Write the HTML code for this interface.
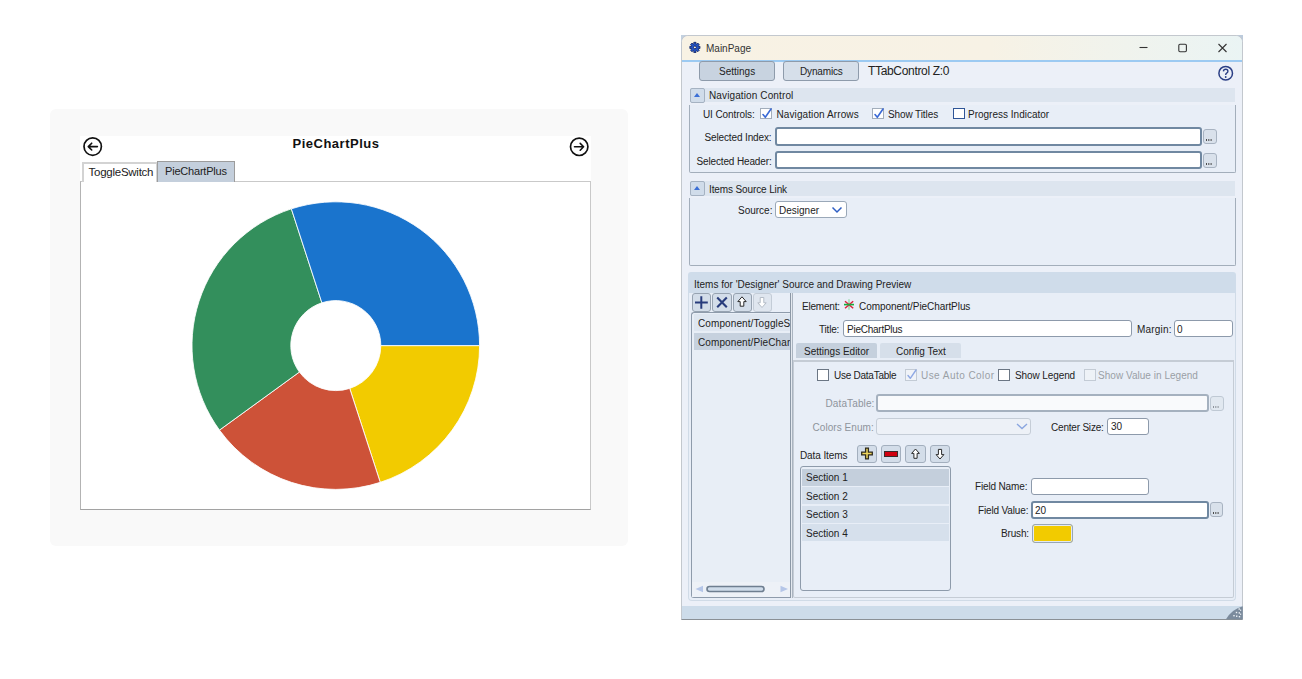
<!DOCTYPE html>
<html><head><meta charset="utf-8">
<style>
*{box-sizing:border-box;margin:0;padding:0}
html,body{width:1302px;height:679px;overflow:hidden;background:#fff;font-family:"Liberation Sans",sans-serif;color:#1a1a1a}
.a{position:absolute}
.t{position:absolute;white-space:pre;line-height:1}
/* left panel */
#lp{left:50px;top:109px;width:578px;height:437px;background:#f9f9f9;border-radius:6px}
#lw{left:80px;top:136px;width:511px;height:374px;background:#fff}
#cb{left:80px;top:181px;width:511px;height:329px;border:1px solid #c9c9c9;border-left-color:#b3b3b3;border-bottom-color:#a2a2a2;background:#fff}
/* window */
#win{left:681px;top:35px;width:562px;height:585px;background:#ecf0f8;border:1px solid #c3c8ce;border-bottom-color:#8a9096;border-radius:7px 7px 0 0;overflow:hidden}
#tb{left:0;top:0;width:562px;height:26px;background:linear-gradient(90deg,#f8f2e4 0%,#f7f2e5 55%,#eaf4f4 100%);border-bottom:2px solid #9ccaf2}
.w{font-size:10px;color:#222}
.btn{position:absolute;border:1px solid #9aa6b4;border-radius:3px;background:#d9e2ec}
.hdr{position:absolute;background:#dde5ef}
.cbtn{position:absolute;width:15px;height:15px;border:1px solid #a5b2c2;border-radius:2px;background:#d0dcea}
.cbtn:after{content:"";position:absolute;left:3px;top:4px;border-left:3.5px solid transparent;border-right:3.5px solid transparent;border-bottom:4px solid #3b6fd6}
.gb{position:absolute;border:1px solid #a3aebb;border-top:none;border-radius:0 0 2px 2px;background:#e8eef7}
.tx{position:absolute;background:#fff;border:2px solid #7088a1;border-radius:3px}
.tx2{position:absolute;background:#fff;border:1px solid #9aa8b8;border-radius:2px}
.dots{position:absolute;width:13.5px;height:15px;border:1.5px solid #a8b3c1;border-radius:3px;background:#d9e1eb}
.dots:after{content:"";position:absolute;left:2.2px;top:9.3px;width:1.3px;height:1.5px;background:#4a4a4a;box-shadow:2.3px 0 0 #4a4a4a,4.6px 0 0 #4a4a4a}
.dis:after{background:#8d939b;box-shadow:2.3px 0 0 #8d939b,4.6px 0 0 #8d939b}
.chk{position:absolute;width:12px;height:11px;border:1.3px solid #a2adbb;background:#fff}
</style></head><body>

<!-- LEFT PANEL -->
<div id="lp" class="a"></div>
<div id="lw" class="a"></div>
<div id="cb" class="a"></div>
<svg class="a" style="left:0;top:0" width="1302" height="679">
  <circle cx="92.7" cy="146.6" r="8.7" fill="none" stroke="#111" stroke-width="1.7"/>
  <path d="M88.3 146.6 H97.4 M91.7 143.2 L88.3 146.6 L91.7 150" fill="none" stroke="#111" stroke-width="1.6" stroke-linecap="round" stroke-linejoin="round"/>
  <circle cx="579.2" cy="146.8" r="8.7" fill="none" stroke="#111" stroke-width="1.7"/>
  <path d="M574.5 146.8 H583.6 M580.2 143.4 L583.6 146.8 L580.2 150.2" fill="none" stroke="#111" stroke-width="1.6" stroke-linecap="round" stroke-linejoin="round"/>
</svg>
<div class="t" style="left:292.5px;top:137px;font-size:13px;letter-spacing:0.5px;font-weight:bold;color:#111">PieChartPlus</div>
<!-- tabs -->
<div class="a" style="left:82px;top:162px;width:76px;height:20px;border:2px solid #d3d3d3;border-bottom:none;background:#fff"></div>
<div class="t" style="left:88.5px;top:167px;font-size:11.5px;letter-spacing:-0.25px;color:#222">ToggleSwitch</div>
<div class="a" style="left:157px;top:161px;width:78px;height:21px;border:1px solid #9c9c9c;border-bottom:none;background:#c4cfdc"></div>
<div class="t" style="left:165px;top:166px;font-size:11px;letter-spacing:-0.2px;color:#222">PieChartPlus</div>
<!-- pie -->
<svg class="a" style="left:0;top:0" width="1302" height="679" id="pie">
<path d="M479.60 345.60 A143.8 143.8 0 0 1 380.24 482.36 L349.71 388.40 A45.0 45.0 0 0 0 380.80 345.60Z" fill="#f2cb00" stroke="#fff" stroke-width="0.85"/>
<path d="M380.24 482.36 A143.8 143.8 0 0 1 219.46 430.12 L299.39 372.05 A45.0 45.0 0 0 0 349.71 388.40Z" fill="#cd5238" stroke="#fff" stroke-width="0.85"/>
<path d="M219.46 430.12 A143.8 143.8 0 0 1 291.36 208.84 L321.89 302.80 A45.0 45.0 0 0 0 299.39 372.05Z" fill="#338f5c" stroke="#fff" stroke-width="0.85"/>
<path d="M291.36 208.84 A143.8 143.8 0 0 1 479.60 345.60 L380.80 345.60 A45.0 45.0 0 0 0 321.89 302.80Z" fill="#1a74cd" stroke="#fff" stroke-width="0.85"/>
</svg>

<!-- WINDOW -->
<div class="a" style="left:681px;top:35px;width:6px;height:6px;background:#c3d1e0"></div>
<div class="a" style="left:1237px;top:35px;width:6px;height:6px;background:#bccbdc"></div>
<div id="win" class="a">
  <div id="tb" class="a"></div>
</div>

<!-- title bar -->
<svg class="a" style="left:688px;top:41px" width="14" height="14" viewBox="0 0 14 14">
  <path d="M5.87 3.06 L5.77 1.33 L8.03 1.33 L7.93 3.06 L8.53 3.30 L9.69 2.01 L11.29 3.61 L10.00 4.77 L10.24 5.37 L11.97 5.27 L11.97 7.53 L10.24 7.43 L10.00 8.03 L11.29 9.19 L9.69 10.79 L8.53 9.50 L7.93 9.74 L8.03 11.47 L5.77 11.47 L5.87 9.74 L5.27 9.50 L4.11 10.79 L2.51 9.19 L3.80 8.03 L3.56 7.43 L1.83 7.53 L1.83 5.27 L3.56 5.37 L3.80 4.77 L2.51 3.61 L4.11 2.01 L5.27 3.30Z" fill="#2353c6" stroke="#0e2160" stroke-width="0.8" stroke-linejoin="miter"/>
  <circle cx="6.9" cy="6.4" r="1.4" fill="#f7f1e3" stroke="#0e2160" stroke-width="0.9"/>
</svg>
<div class="t w" style="left:706px;top:44px;font-size:10px;color:#333">MainPage</div>
<svg class="a" style="left:1130px;top:38px" width="110" height="20">
  <path d="M9.5 9.5 H17.5" stroke="#333" stroke-width="1.1"/>
  <rect x="48.8" y="6.2" width="7.6" height="7.6" rx="1.2" fill="none" stroke="#333" stroke-width="1.1"/>
  <path d="M88.5 6 L96.5 14 M96.5 6 L88.5 14" stroke="#333" stroke-width="1.1"/>
</svg>
<!-- top buttons -->
<div class="btn" style="left:699px;top:61px;width:76px;height:20px;background:#c8d3e0;border-color:#8e9bab"></div>
<div class="t w" style="left:719px;top:67px">Settings</div>
<div class="btn" style="left:783px;top:61px;width:76px;height:20px;background:#d6dfea;border-color:#8e9bab"></div>
<div class="t w" style="left:800px;top:67px;letter-spacing:-0.15px">Dynamics</div>
<div class="t" style="left:868px;top:65px;font-size:12px;letter-spacing:-0.33px;color:#222">TTabControl Z:0</div>
<svg class="a" style="left:1217px;top:65px" width="18" height="18">
  <circle cx="8.7" cy="8.2" r="6.8" fill="none" stroke="#2b3f85" stroke-width="1.5"/>
  <path d="M6.4 6.4 Q6.6 4.3 8.7 4.3 Q10.9 4.3 10.9 6.3 Q10.9 7.6 9.6 8.2 Q8.7 8.7 8.7 9.9" fill="none" stroke="#2b3f85" stroke-width="1.4"/>
  <circle cx="8.7" cy="12" r="0.9" fill="#2b3f85"/>
</svg>

<!-- Navigation Control -->
<div class="hdr" style="left:690px;top:88px;width:545px;height:14px"></div>
<div class="cbtn" style="left:690px;top:88px"></div>
<div class="t w" style="left:709px;top:91px;letter-spacing:0.12px">Navigation Control</div>
<div class="gb" style="left:689px;top:105px;width:547px;height:68px"></div>
<div class="t w" style="left:703px;top:110px;letter-spacing:-0.1px">UI Controls:</div>
<div class="chk" style="left:760px;top:108px"></div><svg class="a" style="left:760px;top:107px" width="14" height="13"><path d="M3 7.5 L5.3 10.3 L11 2" fill="none" stroke="#3b6ad6" stroke-width="1.6" stroke-linecap="round" stroke-linejoin="round"/></svg>
<div class="t w" style="left:776.5px;top:110px;letter-spacing:0.1px">Navigation Arrows</div>
<div class="chk" style="left:872px;top:108px"></div><svg class="a" style="left:872px;top:107px" width="14" height="13"><path d="M3 7.5 L5.3 10.3 L11 2" fill="none" stroke="#3b6ad6" stroke-width="1.6" stroke-linecap="round" stroke-linejoin="round"/></svg>
<div class="t w" style="left:888px;top:110px;letter-spacing:-0.1px">Show Titles</div>
<div class="chk" style="left:953px;top:108px;border-color:#2f5597;border-width:1.5px"></div>
<div class="t w" style="left:968px;top:110px">Progress Indicator</div>
<div class="t w" style="left:704.5px;top:133px;letter-spacing:-0.13px">Selected Index:</div>
<div class="tx" style="left:775px;top:127px;width:427px;height:19px"></div>
<div class="dots" style="left:1203px;top:129px"></div>
<div class="t w" style="left:696.5px;top:157px;letter-spacing:-0.14px">Selected Header:</div>
<div class="tx" style="left:775px;top:151px;width:427px;height:18px"></div>
<div class="dots" style="left:1203px;top:153px"></div>

<!-- Items Source Link -->
<div class="hdr" style="left:690px;top:181px;width:545px;height:15px"></div>
<div class="cbtn" style="left:690px;top:181px"></div>
<div class="t w" style="left:709px;top:185px;letter-spacing:-0.12px">Items Source Link</div>
<div class="gb" style="left:689px;top:198px;width:547px;height:68px"></div>
<div class="t w" style="left:738px;top:206px">Source:</div>
<div class="tx2" style="left:775px;top:201px;width:72px;height:17px;border-radius:3px"></div>
<div class="t w" style="left:779px;top:206px">Designer</div>
<svg class="a" style="left:831px;top:206px" width="12" height="8"><path d="M1.5 1.5 L6 6 L10.5 1.5" fill="none" stroke="#2f5fc4" stroke-width="1.5"/></svg>

<!-- Items for Designer -->
<div class="a" style="left:688px;top:272px;width:548px;height:21px;background:#cfdcea;border-radius:3px 3px 0 0"></div>
<div class="t w" style="left:694px;top:280px">Items for 'Designer' Source and Drawing Preview</div>
<div class="a" style="left:688px;top:293px;width:548px;height:308px;border:1px solid #d0dbe7;border-top:none;border-radius:0 0 4px 4px;background:#e8eef7"></div>
<!-- toolbar -->
<div class="btn" style="left:691.5px;top:293px;width:19.5px;height:19px;background:#d3dde9;border:1.3px solid #97a3b1"></div>
<svg class="a" style="left:692px;top:293px" width="19" height="19"><path d="M9.3 3.2 V15.8 M3 9.5 H15.8" stroke="#283c7c" stroke-width="2"/></svg>
<div class="btn" style="left:712px;top:293px;width:20px;height:19px;background:#d3dde9;border:1.3px solid #97a3b1"></div>
<svg class="a" style="left:712px;top:293px" width="20" height="19"><path d="M5.2 4.5 L14.8 14.3 M14.8 4.5 L5.2 14.3" stroke="#283c7c" stroke-width="2.1"/></svg>
<div class="btn" style="left:732.5px;top:293px;width:19.5px;height:19px;background:#d3dde9;border:1.3px solid #97a3b1"></div>
<svg class="a" style="left:733px;top:293px" width="19" height="19"><path d="M9 3.8 L13.2 8.6 H10.8 V13.2 H7.2 V8.6 H4.8 Z" fill="#fff" stroke="#2a2a2a" stroke-width="1" stroke-linejoin="round"/></svg>
<div class="btn" style="left:752.5px;top:293px;width:19.5px;height:19px;background:#dfe6ef;border:1.3px solid #c3ccd7"></div>
<svg class="a" style="left:753px;top:293px" width="19" height="19"><path d="M9 14.5 L13.2 9.8 H10.8 V4.5 H7.2 V9.8 H4.8 Z" fill="#fff" stroke="#b4bcc6" stroke-width="1" stroke-linejoin="round"/></svg>
<!-- left list -->
<div class="a" style="left:691px;top:312px;width:101px;height:286px;border:1px solid #8e9bab;border-right:none;border-radius:3px 0 0 3px;background:#e8eef6"></div>
<div class="a" style="left:694px;top:314px;width:96px;height:17px;background:#dee6f0"></div>
<div class="t w" style="left:698px;top:319px;letter-spacing:0.1px;width:92px;overflow:hidden">Component/ToggleSwitch</div>
<div class="a" style="left:694px;top:333px;width:96px;height:17px;background:#c6d1de"></div>
<div class="t w" style="left:698px;top:338px;letter-spacing:0.1px;width:92px;overflow:hidden">Component/PieChartPlus</div>
<div class="a" style="left:692px;top:582px;width:98px;height:15px;background:#edf1f7"></div>
<svg class="a" style="left:692px;top:582px" width="100" height="16">
  <path d="M3.5 7 L11 3.8 V10.2 Z" fill="#b5c6e8"/>
  <path d="M96 7 L88.5 3.8 V10.2 Z" fill="#b5c6e8"/>
  <rect x="15" y="4.5" width="57" height="5" rx="2.5" fill="#cfdcea" stroke="#6e7e90" stroke-width="1.6"/>
</svg>
<div class="a" style="left:790px;top:293px;width:3px;height:305px;background:#e4e9f0;border-left:1px solid #8c98a6;border-right:1px solid #aab4c0"></div>
<!-- element -->
<div class="t w" style="left:802px;top:302px;letter-spacing:-0.2px">Element:</div>
<svg class="a" style="left:843px;top:298px" width="12" height="13">
  <path d="M6 1.3 V11.8" stroke="#9edcb2" stroke-width="1.5"/>
  <path d="M2 3.2 L10.2 10.3 M10.2 3.2 L2 10.3" stroke="#dc2340" stroke-width="1.5"/>
  <path d="M1 6.6 H11" stroke="#17ad3e" stroke-width="1.6"/>
</svg>
<div class="t w" style="left:859px;top:302px;letter-spacing:-0.07px">Component/PieChartPlus</div>
<div class="t w" style="left:819px;top:325px;letter-spacing:-0.2px">Title:</div>
<div class="tx2" style="left:843px;top:320px;width:289px;height:17px;border-radius:3px;border-color:#8d9aab"></div>
<div class="t w" style="left:847px;top:325px;letter-spacing:-0.25px">PieChartPlus</div>
<div class="t w" style="left:1137px;top:325px;letter-spacing:0.2px">Margin:</div>
<div class="tx2" style="left:1174px;top:320px;width:59px;height:17px;border-radius:3px;border-color:#8d9aab"></div>
<div class="t w" style="left:1177px;top:325px">0</div>
<!-- settings tabs -->
<div class="a" style="left:796px;top:343px;width:81px;height:15px;background:#c5d0dd;border-radius:2px 2px 0 0"></div>
<div class="t w" style="left:804px;top:347px">Settings Editor</div>
<div class="a" style="left:880px;top:343px;width:81px;height:15px;background:#d6dfea;border-radius:2px 2px 0 0"></div>
<div class="t w" style="left:896px;top:347px">Config Text</div>
<div class="a" style="left:793px;top:360px;width:441px;height:238px;border:1px solid #c5ccd5;border-top:2px solid #c5ccd5;border-radius:0 0 2px 2px"></div>
<!-- options -->
<div class="chk" style="left:817px;top:369px;height:12px;border-color:#6b7684"></div>
<div class="t w" style="left:834px;top:371px;letter-spacing:-0.25px">Use DataTable</div>
<div class="chk" style="left:905px;top:369px;height:12px;border-color:#c3cbd5;background:#f0f3f8"></div>
<svg class="a" style="left:905px;top:368px" width="14" height="13"><path d="M3 7.5 L5.3 10.3 L11 2" fill="none" stroke="#8fa9e4" stroke-width="1.4" stroke-linecap="round" stroke-linejoin="round"/></svg>
<div class="t w" style="left:921px;top:371px;color:#9a9fa6;letter-spacing:0.45px">Use Auto Color</div>
<div class="chk" style="left:998px;top:369px;height:12px;border-color:#6b7684"></div>
<div class="t w" style="left:1015px;top:371px;letter-spacing:-0.1px">Show Legend</div>
<div class="chk" style="left:1084px;top:369px;height:12px;border-color:#c3cbd5;background:#eef2f7"></div>
<div class="t w" style="left:1098px;top:371px;color:#9a9fa6;letter-spacing:0.03px">Show Value in Legend</div>
<div class="t w" style="left:825.5px;top:399px;color:#8e949c;letter-spacing:0.12px">DataTable:</div>
<div class="tx" style="left:876px;top:394px;width:333px;height:18px;background:#f9fafc;border-color:#a5b1bf"></div>
<div class="dots dis" style="left:1210px;top:396px;border-color:#bfc9d4;background:#e1e8f0"></div>
<div class="t w" style="left:812.5px;top:423px;color:#8e949c;letter-spacing:0.06px">Colors Enum:</div>
<div class="tx2" style="left:876px;top:418px;width:155px;height:17px;background:#edf1f7;border-color:#c5cdd7;border-radius:3px"></div>
<svg class="a" style="left:1015px;top:422px" width="14" height="9"><path d="M2 2 L7 6.5 L12 2" fill="none" stroke="#8aa6e0" stroke-width="1.4"/></svg>
<div class="t w" style="left:1051px;top:423px;letter-spacing:-0.2px">Center Size:</div>
<div class="tx2" style="left:1107px;top:418px;width:42px;height:17px;border-radius:3px;border-color:#8d9aab"></div>
<div class="t w" style="left:1111px;top:422px">30</div>
<!-- data items -->
<div class="t w" style="left:800px;top:451px;letter-spacing:-0.1px">Data Items</div>
<div class="btn" style="left:857px;top:445px;width:20px;height:18px;background:#d3dde9;border-color:#a3afbe"></div>
<svg class="a" style="left:857px;top:445px" width="20" height="18"><path d="M8.6 3.1 H11.4 V7.1 H15.3 V9.9 H11.4 V13.9 H8.6 V9.9 H4.7 V7.1 H8.6 Z" fill="#efd65e" stroke="#2e2a1e" stroke-width="1.3" stroke-linejoin="miter"/></svg>
<div class="btn" style="left:881px;top:445px;width:20px;height:18px;background:#d3dde9;border-color:#a3afbe"></div>
<svg class="a" style="left:881px;top:445px" width="20" height="18"><rect x="3.5" y="6.5" width="13" height="5" fill="#d0000f" stroke="#3a2a2a" stroke-width="1"/></svg>
<div class="btn" style="left:905px;top:445px;width:21px;height:18px;background:#d3dde9;border-color:#a3afbe"></div>
<svg class="a" style="left:905px;top:445px" width="21" height="18"><path d="M10.5 4 L14.4 8.4 H12.1 V13.3 H8.9 V8.4 H6.6 Z" fill="#fff" stroke="#2a2a2a" stroke-width="1" stroke-linejoin="round"/></svg>
<div class="btn" style="left:930px;top:445px;width:20px;height:18px;background:#d3dde9;border-color:#a3afbe"></div>
<svg class="a" style="left:930px;top:445px" width="20" height="18"><path d="M10 14 L13.9 9.6 H11.6 V4.4 H8.4 V9.6 H6.1 Z" fill="#fff" stroke="#2a2a2a" stroke-width="1" stroke-linejoin="round"/></svg>
<div class="a" style="left:800px;top:466px;width:151px;height:125px;border:1px solid #8e9bab;border-radius:3px"></div>
<div class="a" style="left:802px;top:469px;width:147px;height:17px;background:#c4cfdc"></div>
<div class="t w" style="left:806px;top:473px">Section 1</div>
<div class="a" style="left:802px;top:487px;width:147px;height:17px;background:#d6e0ec"></div>
<div class="t w" style="left:806px;top:492px">Section 2</div>
<div class="a" style="left:802px;top:506px;width:147px;height:17px;background:#d6e0ec"></div>
<div class="t w" style="left:806px;top:510px">Section 3</div>
<div class="a" style="left:802px;top:524px;width:147px;height:17px;background:#d6e0ec"></div>
<div class="t w" style="left:806px;top:529px">Section 4</div>
<!-- fields -->
<div class="t w" style="left:975px;top:482px;letter-spacing:-0.15px">Field Name:</div>
<div class="tx2" style="left:1031px;top:478px;width:118px;height:17px;border-radius:3px;border-color:#8d9aab"></div>
<div class="t w" style="left:978px;top:506px;letter-spacing:-0.15px">Field Value:</div>
<div class="tx" style="left:1031px;top:501px;width:178px;height:18px"></div>
<div class="t w" style="left:1035px;top:506px">20</div>
<div class="dots" style="left:1209.5px;top:502px"></div>
<div class="t w" style="left:1001px;top:529px;letter-spacing:-0.15px">Brush:</div>
<div class="a" style="left:1032px;top:524px;width:41px;height:19px;background:#f2cb00;border:1px solid #98a6b6;border-radius:3px;box-shadow:inset 0 0 0 1px #e3eaf2"></div>
<!-- status bar -->
<div class="a" style="left:682px;top:606px;width:560px;height:13px;background:#cddcea"></div>
<svg class="a" style="left:1225px;top:605px" width="18" height="15"><path d="M1 14.2 A28 28 0 0 1 17.8 1.2 V14.2 Z" fill="#7b8b9d"/><g fill="#eef2f7"><rect x="13.5" y="3.3" width="1.4" height="1.4"/><rect x="15" y="4.6" width="1.2" height="1.2"/><rect x="10.8" y="6.8" width="1.4" height="1.4"/><rect x="13.6" y="7.2" width="1.4" height="1.4"/><rect x="15" y="8.6" width="1.2" height="1.2"/><rect x="8.3" y="10" width="1.4" height="1.4"/><rect x="11" y="10.5" width="1.4" height="1.4"/><rect x="13.8" y="11" width="1.4" height="1.4"/></g></svg>

</body></html>
